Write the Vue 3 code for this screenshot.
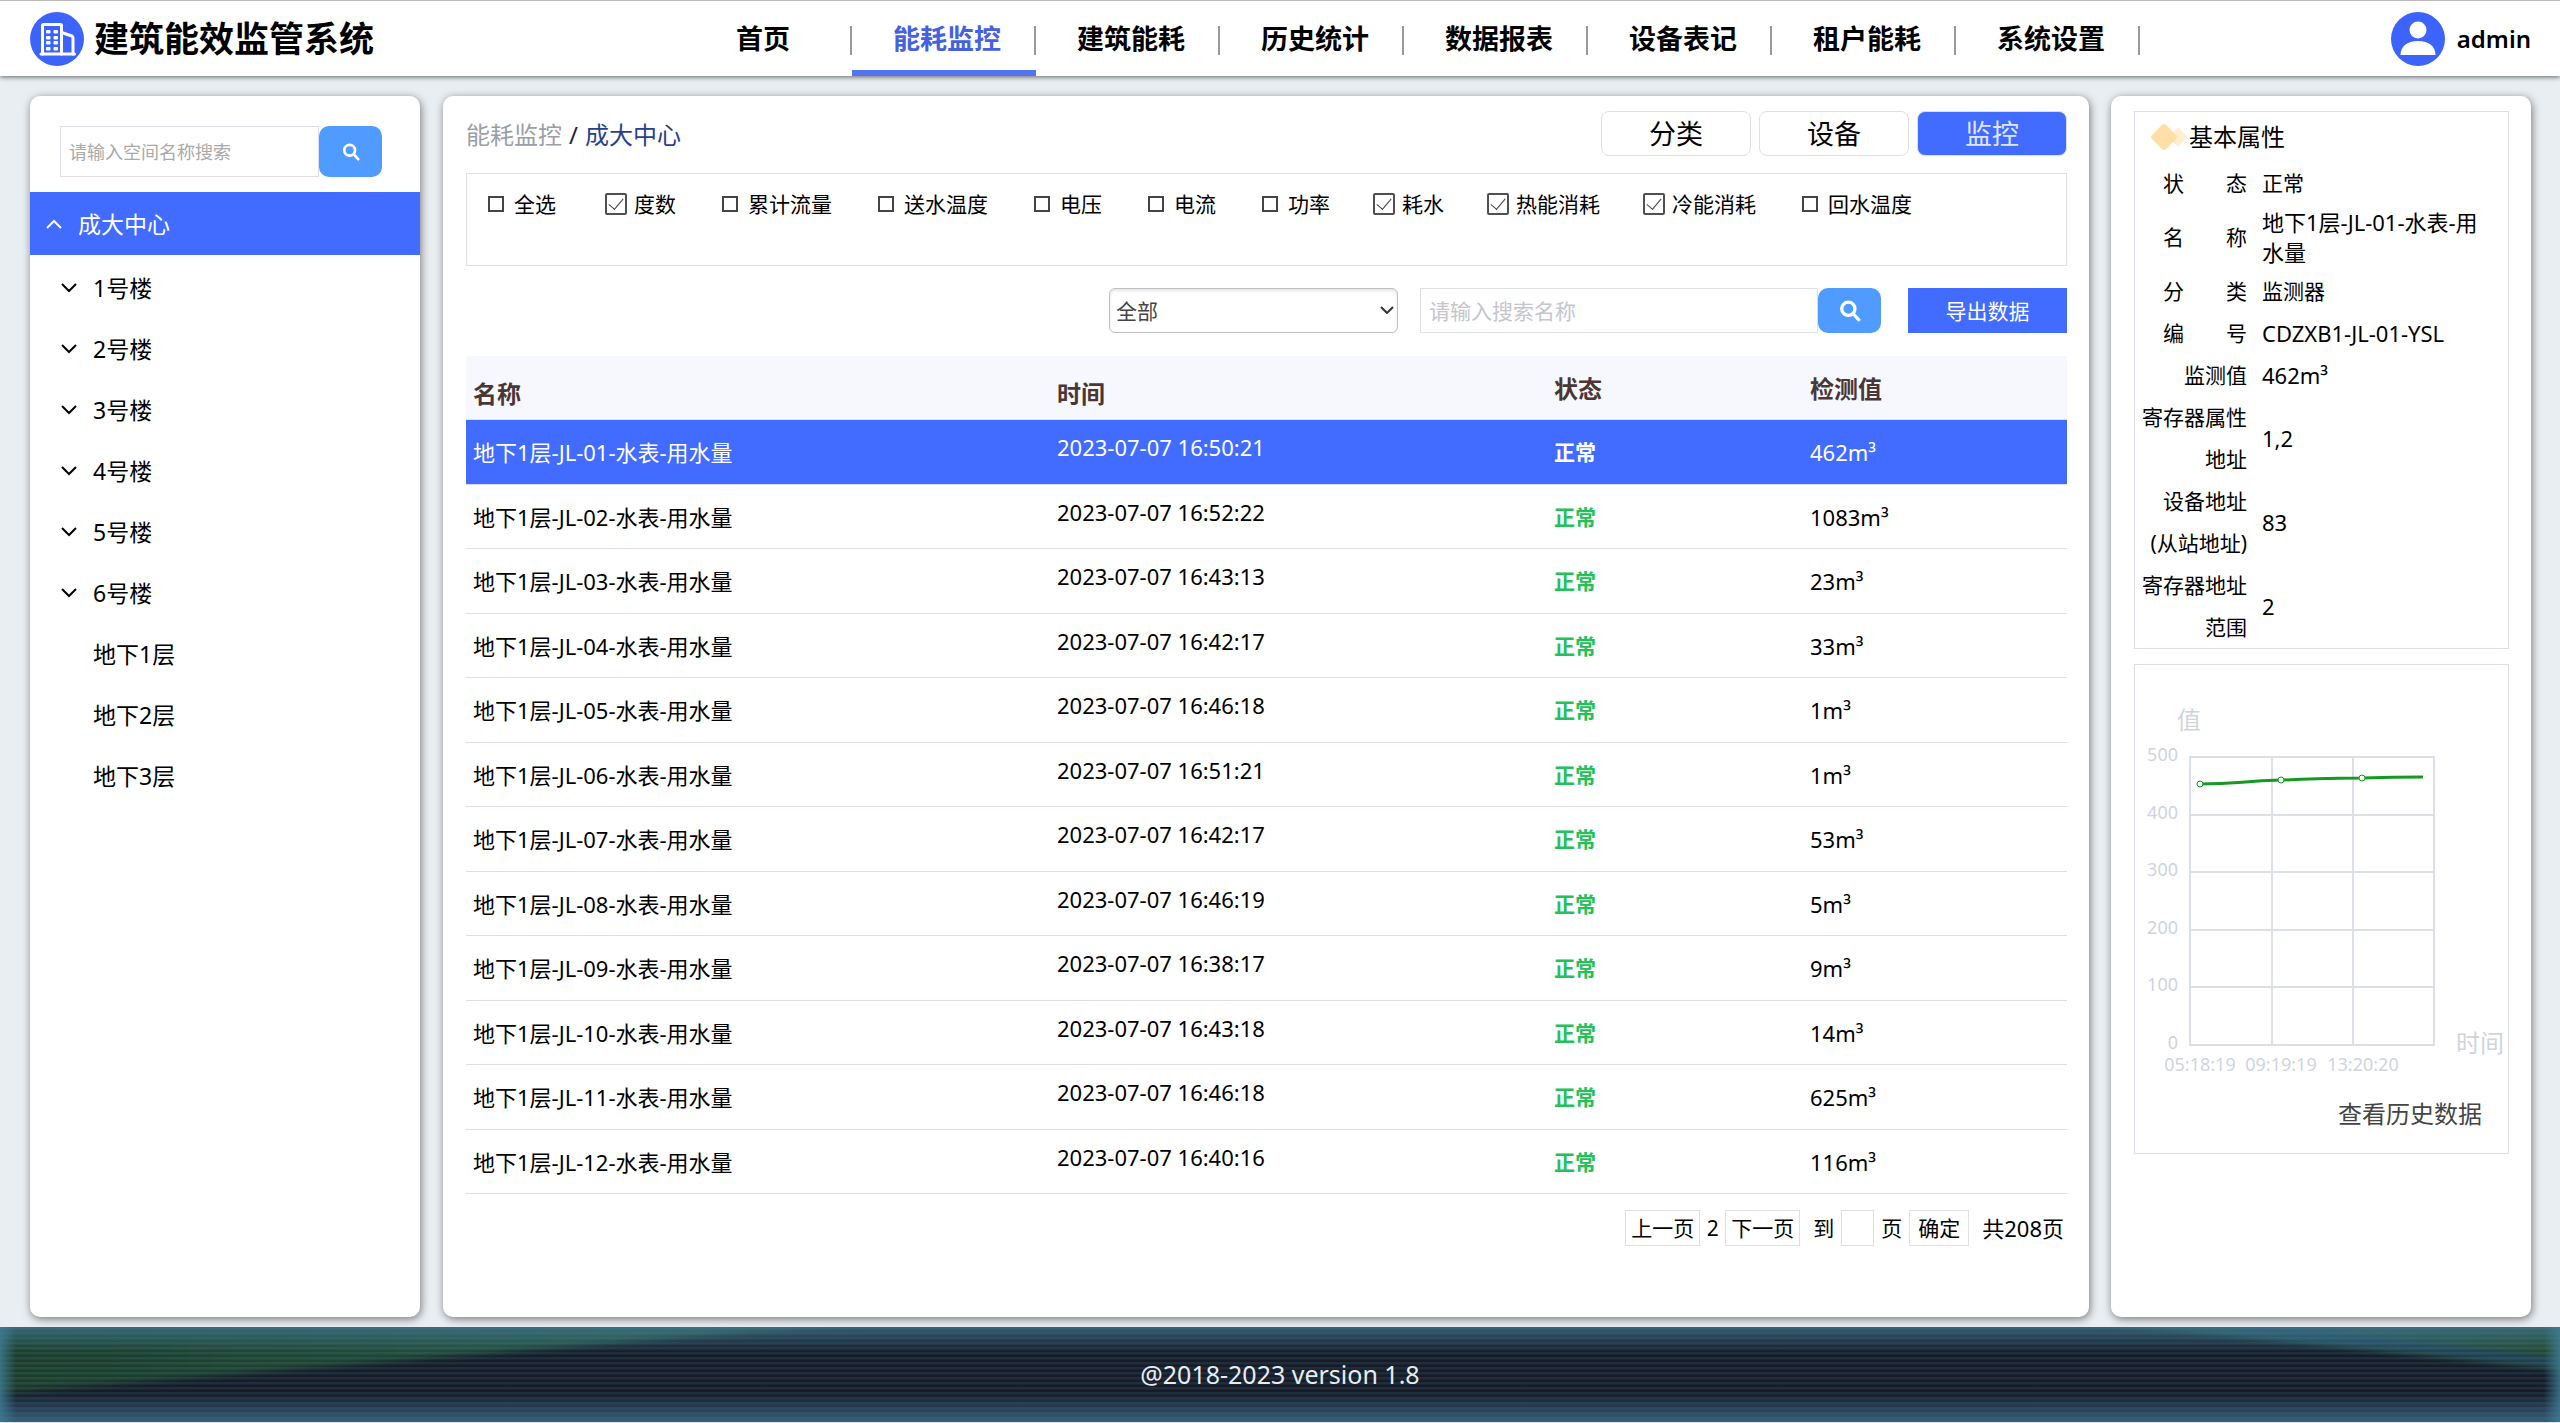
<script setup>
import { ref } from 'vue'

const navItems = ['首页', '能耗监控', '建筑能耗', '历史统计', '数据报表', '设备表记', '租户能耗', '系统设置']
const activeNav = '能耗监控'

const buildings = ['1号楼', '2号楼', '3号楼', '4号楼', '5号楼', '6号楼']
const floors = ['地下1层', '地下2层', '地下3层']

const tabs = ['分类', '设备', '监控']
const activeTab = '监控'

const filters = ref([
  { label: '全选', on: false },
  { label: '度数', on: true },
  { label: '累计流量', on: false },
  { label: '送水温度', on: false },
  { label: '电压', on: false },
  { label: '电流', on: false },
  { label: '功率', on: false },
  { label: '耗水', on: true },
  { label: '热能消耗', on: true },
  { label: '冷能消耗', on: true },
  { label: '回水温度', on: false },
])

const rows = [
  ['01', '16:50:21', '462'],
  ['02', '16:52:22', '1083'],
  ['03', '16:43:13', '23'],
  ['04', '16:42:17', '33'],
  ['05', '16:46:18', '1'],
  ['06', '16:51:21', '1'],
  ['07', '16:42:17', '53'],
  ['08', '16:46:19', '5'],
  ['09', '16:38:17', '9'],
  ['10', '16:43:18', '14'],
  ['11', '16:46:18', '625'],
  ['12', '16:40:16', '116'],
].map(([no, time, value]) => ({
  name: `地下1层-JL-${no}-水表-用水量`,
  time: `2023-07-07 ${time}`,
  value: `${value}m³`,
}))

const details = [
  { label: ['状', '态'], value: '正常', spread: true },
  { label: ['名', '称'], value: '地下1层-JL-01-水表-用水量', spread: true },
  { label: ['分', '类'], value: '监测器', spread: true },
  { label: ['编', '号'], value: 'CDZXB1-JL-01-YSL', spread: true },
  { label: ['监测值'], value: '462m³' },
  { label: ['寄存器属性', '地址'], value: '1,2' },
  { label: ['设备地址', '(从站地址)'], value: '83' },
  { label: ['寄存器地址', '范围'], value: '2' },
]

const yTicks = [500, 400, 300, 200, 100, 0].map((v, i) => ({ v, y: 93 + Math.round(i * 57.6) }))
const xTicks = [
  { t: '05:18:19', x: 66 },
  { t: '09:19:19', x: 147 },
  { t: '13:20:20', x: 229 },
]
const points = [[66, 119], [147, 115], [228, 113]]
</script>

<template>
  <div class="page">
    <header class="topbar">
      <div class="brand">
        <svg class="round" viewBox="0 0 54 54" aria-hidden="true">
          <circle cx="27" cy="27" r="27" fill="#3c63fb" />
          <g fill="none" stroke="#fff" stroke-width="3" stroke-linejoin="round" stroke-linecap="round">
            <path d="M12.500 42V13.500Q12.500 12.500 13.500 12.500H30.500Q31.500 12.500 31.500 13.500V42" />
            <path d="M31.500 20.500L42 24Q43 24.500 43 25.500V42" />
            <path d="M11 42H44.500" />
          </g>
          <g fill="#fff">
            <template v-for="y in [18, 24, 29, 35]" :key="y">
              <rect x="16" :y="y" width="4.500" height="3.500" rx="1" />
              <rect x="23.500" :y="y" width="4.500" height="3.500" rx="1" />
            </template>
          </g>
        </svg>
        <h1>建筑能效监管系统</h1>
      </div>
      <nav class="nav">
        <a v-for="n in navItems" :key="n" href="#" :class="{ active: n === activeNav }">{{ n }}</a>
      </nav>
      <div class="user">
        <svg class="round" viewBox="0 0 54 54" aria-hidden="true">
          <circle cx="27" cy="27" r="27" fill="#3c63fb" />
          <circle cx="27" cy="18" r="8.500" fill="#fff" />
          <path d="M9.500 43C9.500 34.500 16 29 27 29S44.500 34.500 44.500 43Z" fill="#fff" />
        </svg>
        <span>admin</span>
      </div>
    </header>

    <main class="body">
      <aside class="card side">
        <form class="search side-search" @submit.prevent>
          <input type="text" placeholder="请输入空间名称搜索" aria-label="空间名称" />
          <button type="submit" aria-label="搜索">
            <svg viewBox="0 0 20 20" width="18" height="18"><circle cx="8.500" cy="8" r="6" /><path d="M13 12.500L18 18" /></svg>
          </button>
        </form>
        <a class="root" href="#">
          <svg viewBox="0 0 16 10" width="16" height="10"><path d="M1 9L8 2L15 9" /></svg>
          成大中心
        </a>
        <ul class="tree">
          <li v-for="b in buildings" :key="b">
            <a href="#"><svg viewBox="0 0 16 10" width="16" height="10"><path d="M1 1L8 8L15 1" /></svg>{{ b }}</a>
          </li>
          <li v-for="f in floors" :key="f" class="leaf"><a href="#">{{ f }}</a></li>
        </ul>
      </aside>

      <section class="card center">
        <div class="head">
          <div class="crumbs"><a href="#">能耗监控</a><span>/</span><b>成大中心</b></div>
          <div class="tabs">
            <button v-for="t in tabs" :key="t" type="button" :class="{ active: t === activeTab }">{{ t }}</button>
          </div>
        </div>

        <div class="filters">
          <label v-for="f in filters" :key="f.label"><input v-model="f.on" type="checkbox" /><span>{{ f.label }}</span></label>
        </div>

        <div class="tools">
          <div class="pick">
            <select aria-label="分类筛选"><option>全部</option></select>
            <svg viewBox="0 0 14 8" width="14" height="8"><path d="M1 1L7 7L13 1" /></svg>
          </div>
          <form class="search name-search" @submit.prevent>
            <input type="text" placeholder="请输入搜索名称" aria-label="搜索名称" />
            <button type="submit" aria-label="搜索">
              <svg viewBox="0 0 20 20" width="22" height="22"><circle cx="8.500" cy="8" r="6" /><path d="M13 12.500L18 18" /></svg>
            </button>
          </form>
          <button class="export" type="button">导出数据</button>
        </div>

        <table>
          <colgroup><col class="c-name" /><col class="c-time" /><col class="c-state" /><col /></colgroup>
          <thead>
            <tr><th class="low">名称</th><th class="low">时间</th><th>状态</th><th>检测值</th></tr>
          </thead>
          <tbody>
            <tr v-for="(r, i) in rows" :key="r.name" :class="{ picked: i === 0 }">
              <td>{{ r.name }}</td>
              <td class="time">{{ r.time }}</td>
              <td class="state">正常</td>
              <td>{{ r.value }}</td>
            </tr>
          </tbody>
        </table>

        <div class="pager">
          <button type="button">上一页</button>
          <span class="now">2</span>
          <button type="button">下一页</button>
          <label for="page-no">到</label>
          <input id="page-no" type="text" />
          <span>页</span>
          <button class="ok" type="button">确定</button>
          <span class="total">共208页</span>
        </div>
      </section>

      <aside class="card detail">
        <div class="box">
          <h2>
            <svg viewBox="0 0 40 30" width="40" height="30" aria-hidden="true">
              <rect x="22" y="8" width="14" height="14" rx="2" transform="rotate(45 29 15)" fill="#ffefd2" />
              <rect x="5" y="5" width="20" height="20" rx="3" transform="rotate(45 15 15)" fill="#ffdfa8" />
            </svg>
            基本属性
          </h2>
          <dl>
            <div v-for="d in details" :key="d.label[0]">
              <dt :class="{ spread: d.spread }"><span v-for="l in d.label" :key="l">{{ l }}</span></dt>
              <dd :class="{ wide: /\d/.test(d.value) }">{{ d.value }}</dd>
            </div>
          </dl>
        </div>

        <div class="box chart">
          <svg viewBox="1 0 373 416" role="img" aria-label="监测值曲线">
            <g class="grid">
              <path v-for="t in yTicks" :key="t.v" :d="`M55 ${t.y - 1}H301`" />
              <path v-for="x in [56, 138, 219, 300]" :key="x" :d="`M${x} 91V380`" />
            </g>
            <g class="axis">
              <text v-for="t in yTicks" :key="t.v" x="44" :y="t.y + 3" text-anchor="end">{{ t.v }}</text>
              <text v-for="t in xTicks" :key="t.t" :x="t.x" y="406" text-anchor="middle">{{ t.t }}</text>
              <text class="big" x="55" y="64" text-anchor="middle">值</text>
              <text class="big" x="346" y="387" text-anchor="middle">时间</text>
            </g>
            <path class="line" d="M66 119C106 119 106 116 147 115C190 114 190 113 228 113C260 112 260 112 289 112" />
            <circle v-for="p in points" :key="p[0]" :cx="p[0]" :cy="p[1]" r="3" class="dot" />
          </svg>
          <a href="#">查看历史数据</a>
        </div>
      </aside>
    </main>

    <footer class="foot">
      <svg class="aurora" viewBox="0 0 2560 95" preserveAspectRatio="none" aria-hidden="true">
        <defs>
          <linearGradient id="gl" x1="0" x2="1" y1="0" y2="0">
            <stop offset="0" stop-color="#24502f" />
            <stop offset="1" stop-color="#37805c" />
          </linearGradient>
          <linearGradient id="gr" x1="0" x2="1" y1="0" y2="0">
            <stop offset="0" stop-color="#2c8080" />
            <stop offset="0.500" stop-color="#2c6a60" />
            <stop offset="1" stop-color="#34602c" />
          </linearGradient>
          <filter id="soft" x="-5%" y="-20%" width="110%" height="140%"><feGaussianBlur stdDeviation="12 3" /></filter>
        </defs>
        <path d="M-40 -10H930L0 66L-40 70Z" fill="url(#gl)" filter="url(#soft)" />
        <path d="M2040 -10H2600V50L2560 42Z" fill="url(#gr)" filter="url(#soft)" />
        <path d="M2180 -6L2580 38" fill="none" stroke="#2c5a78" stroke-width="9" filter="url(#soft)" />
      </svg>
      <p>@2018-2023 version 1.8</p>
    </footer>
  </div>
</template>

<style>
body {
  margin: 0;
  background: #e9eef2;
}
</style>

<style scoped>
.page {
  min-height: 100vh;
  display: flex;
  flex-direction: column;
  font-family: "Noto Sans", "Noto Sans CJK SC", sans-serif;
  font-size: 21px;
  line-height: 28px;
  color: #000;
  background: #e9eef2;
}
.page *, .page { box-sizing: border-box; }
button, input, select { font: inherit; color: inherit; margin: 0; padding: 0; }
button { cursor: pointer; }
a { color: inherit; text-decoration: none; }

.topbar {
  position: relative;
  height: 76px;
  display: grid;
  grid-template: 100% / 638px auto 1fr;
  padding: 0 29px 0 30px;
  border-top: 1px solid #bbb;
  background: #fff;
  box-shadow: 0 1px 5px rgba(0, 0, 0, 0.6);
}
.brand, .user {
  display: flex;
  align-items: center;
  gap: 10px;
}
.user { gap: 12px; }
.round { width: 54px; height: 54px; }
.brand h1 {
  margin: 0;
  font-size: 35px;
  font-weight: 700;
  line-height: 48px;
}
.user {
  justify-content: flex-end;
  font-size: 24px;
  font-weight: 600;
}
.nav { display: flex; }
.nav a {
  position: relative;
  width: 184px;
  padding-left: 6px;
  text-align: center;
  font-size: 27px;
  font-weight: 700;
  line-height: 76px;
}
.nav a::after {
  content: "";
  position: absolute;
  right: 0;
  top: 25px;
  width: 2px;
  height: 29px;
  background: #999;
}
.nav a.active { color: #4560e0; }
.nav a.active::before {
  content: "";
  position: absolute;
  left: 0;
  right: 0;
  bottom: 0;
  height: 6px;
  background: #5274f2;
}

.body {
  flex: 1;
  display: flex;
  padding: 20px 29px 10px 30px;
}
.card {
  min-width: 0;
  background: #fff;
  border-radius: 10px;
  box-shadow: 1px 2px 8px rgba(0, 0, 0, 0.5);
}
.side { flex: 0 0 390px; margin-right: 23px; }
.center { flex: 1; margin-right: 22px; padding: 15px 22px 0 23px; }
.detail { flex: 0 0 420px; padding: 15px 22px 0 23px; }

.search { display: flex; }
.search input {
  flex: 1;
  min-width: 0;
  padding: 0 8px;
  border: 1px solid #dcdfe6;
  border-radius: 0;
  background: #fff;
  outline: none;
}
.search input::placeholder { color: #a9a9a9; opacity: 1; }
.search button {
  width: 63px;
  display: grid;
  place-items: center;
  border: 0;
  border-radius: 10px;
  background: #4f9bff;
}
.search svg { fill: none; stroke: #fff; stroke-width: 3; stroke-linecap: round; }
.side-search {
  height: 51px;
  margin: 30px 38px 15px 30px;
  font-size: 18px;
}

.root {
  display: flex;
  align-items: center;
  gap: 16px;
  height: 63px;
  padding-left: 16px;
  background: #416cff;
  color: #fff;
  font-size: 23px;
}
.root svg, .tree svg { fill: none; stroke: currentColor; stroke-width: 2; }
.tree {
  list-style: none;
  margin: 0;
  padding: 2px 0 0 31px;
  font-size: 23px;
}
.tree a {
  display: flex;
  align-items: center;
  gap: 16px;
  height: 61px;
}
.tree .leaf { padding-left: 32px; }

.head {
  display: flex;
  justify-content: space-between;
  align-items: center;
  height: 45px;
}
.crumbs {
  display: flex;
  gap: 7px;
  padding-top: 3px;
  font-size: 24px;
  color: #1c2440;
}
.crumbs a { color: #999ea8; }
.crumbs b { font-weight: 400; color: #28408c; }
.tabs { display: flex; gap: 8px; }
.tabs button {
  width: 150px;
  height: 45px;
  border: 1px solid #dcdfe6;
  border-radius: 8px;
  background: #fff;
  font-size: 27px;
}
.tabs .active { background: #416cff; color: #dfe6ff; }

.filters {
  display: flex;
  gap: 42px;
  height: 93px;
  margin-top: 17px;
  padding: 14px 17px;
  border: 1px solid #dcdfe6;
}
.filters label {
  display: flex;
  align-items: center;
  gap: 6px;
  height: 32px;
}
.filters label:first-child { margin-right: 6px; }
.filters input {
  appearance: none;
  position: relative;
  width: 16px;
  height: 16px;
  margin: 0 4px;
  border: 2px solid #444;
  background: #fff;
}
.filters input:checked {
  width: 22px;
  height: 22px;
  margin: 0 1px;
  border: 2px solid #505050;
  border-radius: 2px;
}
.filters input:checked::before {
  content: "";
  position: absolute;
  left: 5px;
  top: 0;
  width: 7px;
  height: 13px;
  border: solid #404040;
  border-width: 0 1px 1px 0;
  transform: rotate(40deg);
}
.filters span { line-height: 32px; }

.tools {
  display: flex;
  justify-content: flex-end;
  height: 45px;
  margin: 22px 0 23px;
}
.pick { position: relative; width: 289px; margin-right: 22px; }
.pick select {
  appearance: none;
  width: 100%;
  height: 45px;
  padding: 0 6px;
  border: 1px solid #bfbfbf;
  border-radius: 6px;
  background: #fff;
  box-shadow: inset 0 2px 3px rgba(0, 0, 0, 0.1);
  color: #444;
}
.pick svg {
  position: absolute;
  right: 4px;
  top: 18px;
  fill: none;
  stroke: #333;
  stroke-width: 2;
  pointer-events: none;
}
.name-search { width: 461px; margin-right: 27px; }
.name-search input::placeholder { color: #c4c6cc; }
.export {
  width: 159px;
  border: 0;
  background: #416cff;
  color: #fff;
}

table {
  width: 100%;
  height: 838px;
  table-layout: fixed;
  border-collapse: separate;
  border-spacing: 0;
  font-size: 22px;
}
.c-name { width: 584px; }
.c-time { width: 497px; }
.c-state { width: 256px; }
th, td {
  height: 64px;
  padding: 1px 0 0 7px;
  text-align: left;
  border-bottom: 1px solid #dcdfe6;
}
th {
  padding-top: 2px;
  background: #f6f8fe;
  color: #4a3634;
  font-size: 24px;
  font-weight: 700;
}
th.low { padding-top: 13px; }
td.time { padding-bottom: 10px; }
.state { color: #25c05a; font-size: 21px; font-weight: 700; }
.picked td { background: #416cff; color: #fff; }

.pager {
  display: flex;
  justify-content: flex-end;
  align-items: center;
  height: 36px;
  margin-top: 16px;
  padding-right: 3px;
}
.pager button, .pager input {
  height: 36px;
  border: 1px solid #dcdfe6;
  background: #fff;
}
.pager button { width: 75px; }
.pager input { width: 33px; margin: 0 7px; }
.pager .now { width: 25px; text-align: center; }
.pager label { margin-left: 13px; }
.pager .ok { width: 60px; margin: 0 13px 0 7px; }
.pager .total { font-size: 22px; }

.box { border: 1px solid #dcdfe6; }
.box h2 {
  display: flex;
  align-items: center;
  height: 50px;
  margin: 0;
  padding-left: 14px;
  font-size: 24px;
  font-weight: 400;
}
dl { margin: 0; }
dl > div {
  display: flex;
  align-items: center;
  gap: 15px;
}
dt {
  flex: 0 0 112px;
  display: flex;
  flex-direction: column;
  align-items: flex-end;
  line-height: 42px;
}
dt.spread {
  flex-direction: row;
  justify-content: space-between;
  padding-left: 28px;
}
dd { width: 222px; margin: 0; padding: 3px 0; line-height: 30px; }
dd.wide { font-size: 22px; }

.chart { margin-top: 15px; }
.chart > svg { display: block; width: 100%; }
.chart > a {
  display: block;
  margin: 19px 26px 25px;
  text-align: right;
  font-size: 24px;
  color: #444;
}
.grid path { fill: none; stroke: #dcdfe5; stroke-width: 2; }
.axis text { fill: #d0d4dc; font-size: 18px; }
.axis .big { font-size: 24px; }
.line { fill: none; stroke: #149a22; stroke-width: 3; }
.dot { fill: #fff; stroke: #149a22; stroke-width: 1; }

.foot {
  position: relative;
  height: 96px;
  border-bottom: 1px solid #dfe6ea;
  background: #1c222e;
  overflow: hidden;
}
.aurora {
  position: absolute;
  inset: 0;
  width: 100%;
  height: 95px;
}
.foot::after {
  content: "";
  position: absolute;
  inset: 0;
  background:
    linear-gradient(90deg, rgba(64, 125, 150, 0.8), transparent 16px calc(100% - 16px), rgba(64, 125, 150, 0.8)),
    linear-gradient(rgba(66, 120, 145, 0.7), transparent 26px 66px, rgba(66, 115, 150, 0.75)),
    repeating-linear-gradient(rgba(28, 66, 84, 0.4) 0 2px, rgba(20, 12, 24, 0.35) 3px 5px);
}
.foot p {
  position: relative;
  z-index: 1;
  margin: 0;
  text-align: center;
  font-size: 25px;
  line-height: 94px;
  color: #e6edf2;
}
</style>
